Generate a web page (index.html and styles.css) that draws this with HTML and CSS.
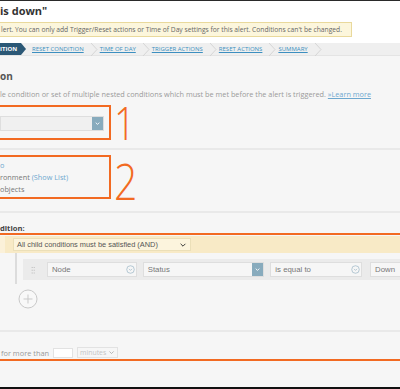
FILE: index.html
```html
<!DOCTYPE html>
<html lang="en">
<head>
    <meta charset="UTF-8">
    <title>Edit alert</title>
    <link rel="stylesheet" href="styles.css">
</head>
<body>
    <div class="shot">
        <header class="head">
            <h1 class="title">is down"</h1>
            <div class="notice">lert. You can only add Trigger/Reset actions or Time of Day settings for this alert. Conditions can't be changed.</div>
        </header>

        <nav class="steps">
            <span class="step current">ITION</span>
            <a class="step" href="#">RESET CONDITION</a>
            <svg class="sep" viewBox="0 0 8 13"><polyline points="1,0 7,6.5 1,13"/></svg>
            <a class="step" href="#">TIME OF DAY</a>
            <svg class="sep" viewBox="0 0 8 13"><polyline points="1,0 7,6.5 1,13"/></svg>
            <a class="step" href="#">TRIGGER ACTIONS</a>
            <svg class="sep" viewBox="0 0 8 13"><polyline points="1,0 7,6.5 1,13"/></svg>
            <a class="step" href="#">RESET ACTIONS</a>
            <svg class="sep" viewBox="0 0 8 13"><polyline points="1,0 7,6.5 1,13"/></svg>
            <a class="step" href="#">SUMMARY</a>
            <svg class="sep" viewBox="0 0 8 13"><polyline points="1,0 7,6.5 1,13"/></svg>
        </nav>

        <main class="content">
            <h2 class="section-title">on</h2>
            <p class="intro">le condition or set of multiple nested conditions which must be met before the alert is triggered. <a href="#">»Learn more</a></p>

            <div class="callout">
                <div class="mark mark-1">
                    <div class="select scope">
                        <span class="select-btn">
                            <svg viewBox="0 0 10 10"><polyline points="3,4 5,6 7,4"/></svg>
                        </span>
                    </div>
                </div>
                <span class="num">1</span>
            </div>

            <hr class="rule">

            <div class="callout">
                <div class="mark mark-2">
                    <div class="line"><span class="link">o</span></div>
                    <div class="line">ronment <span class="link">(Show List)</span></div>
                    <div class="line">objects</div>
                </div>
                <span class="num num-2">2</span>
            </div>

            <hr class="rule">

            <h3 class="label">dition:</h3>

            <div class="mark mark-3">
                <div class="group-bar">
                    <div class="select and">
                        <span>All child conditions must be satisfied (AND)</span>
                        <svg class="caret" viewBox="0 0 10 10"><polyline points="2,3.5 5,6.5 8,3.5"/></svg>
                    </div>
                </div>

                <div class="tree">
                    <div class="cond-row">
                        <span class="grip"></span>
                        <div class="select field node">
                            <span>Node</span>
                            <svg class="circ" viewBox="0 0 10 10"><circle cx="5" cy="5" r="4.2"/><polyline points="3.3,4.3 5,6 6.7,4.3"/></svg>
                        </div>
                        <div class="select field status">
                            <span>Status</span>
                            <span class="select-btn">
                                <svg viewBox="0 0 10 10"><polyline points="3,4 5,6 7,4"/></svg>
                            </span>
                        </div>
                        <div class="select field op">
                            <span>is equal to</span>
                            <svg class="circ" viewBox="0 0 10 10"><circle cx="5" cy="5" r="4.2"/><polyline points="3.3,4.3 5,6 6.7,4.3"/></svg>
                        </div>
                        <div class="select field value">
                            <span>Down</span>
                        </div>
                    </div>
                    <button class="add" type="button">
                        <svg viewBox="0 0 20 20"><circle cx="10" cy="10" r="9"/><line x1="10" y1="5.5" x2="10" y2="14.5"/><line x1="5.5" y1="10" x2="14.5" y2="10"/></svg>
                    </button>
                </div>

                <hr class="rule">

                <div class="duration">
                    <span>for more than</span>
                    <span class="num-input"></span>
                    <span class="unit">minutes
                        <svg viewBox="0 0 10 10"><polyline points="2,3.5 5,6.5 8,3.5"/></svg>
                    </span>
                </div>
            </div>
        </main>
    </div>
</body>
</html>
```

FILE: styles.css
```css
body {
    margin: 0;
    font-family: 'Open Sans', sans-serif;
    background-color: #f6f6f6;
    overflow: hidden;
}
.shot {
    height: 389px;
    box-sizing: border-box;
    border-top: 1px solid #2a2a2a;
    border-bottom: 2px solid #111;
    display: flex;
    flex-direction: column;
    overflow: hidden;
}

/* header */
.head {
    background-color: #fff;
    padding: 2px 0 6px;
}
.title {
    margin: 0;
    font-size: 11px;
    line-height: 15px;
    font-weight: bold;
    color: #333;
}
.notice {
    width: 354px;
    margin-top: 4px;
    margin-left: -2px;
    padding-left: 2px;
    box-sizing: border-box;
    height: 15px;
    line-height: 13px;
    font-size: 6.7px;
    color: #666;
    background-color: #fcf6dc;
    border: 1px solid #e9d99c;
    white-space: nowrap;
    overflow: hidden;
}

/* wizard steps */
.steps {
    height: 12px;
    display: flex;
    align-items: center;
    background-color: #efefef;
    border-bottom: 1px solid #e4e4e4;
}
.step {
    font-size: 6px;
    color: #3c8fc0;
    text-decoration: underline;
    margin: 0 6px 0 2px;
}
.step.current {
    align-self: stretch;
    display: flex;
    align-items: center;
    width: 26px;
    margin: 0 4px 0 0;
    color: #fff;
    font-weight: bold;
    text-decoration: none;
    background-color: #2b5876;
    clip-path: polygon(0 0, 21px 0, 26px 50%, 21px 100%, 0 100%);
}
.sep {
    width: 8px;
    height: 13px;
    fill: none;
    stroke: #cfcfcf;
    stroke-width: 0.8;
}

/* content */
.content {
    flex: 1;
}
.section-title {
    margin: 13px 0 0;
    font-size: 10px;
    line-height: 14px;
    font-weight: bold;
    color: #555;
}
.intro {
    margin: 6px 0 0;
    font-size: 7.3px;
    line-height: 10px;
    color: #9a9a9a;
    white-space: nowrap;
}
.intro a,
.link {
    color: #6ea8cf;
}
.intro a {
    text-decoration: underline;
}
.rule {
    margin: 0;
    border: none;
    border-top: 2px solid #e9e9e9;
}
.callout {
    display: flex;
    align-items: center;
    gap: 3px;
}
.callout:first-of-type {
    margin: 5px 0 8px;
}
.mark {
    border: 2px solid #f26a22;
    margin-left: -2px;
}
.mark-1 {
    width: 109px;
    padding: 9px 0 0;
    height: 22px;
}
.mark-2 {
    width: 109px;
    padding: 2px 0;
    margin: 5px 0 12px -2px;
    font-size: 7.3px;
    line-height: 12px;
    color: #777;
}
.num {
    font-size: 46px;
    line-height: 36px;
    font-weight: 300;
    color: #f26a22;
    transform: scaleX(0.82);
    transform-origin: left center;
}
.num-2 {
    font-size: 50px;
}

/* selects */
.select {
    display: flex;
    align-items: center;
    box-sizing: border-box;
    background-color: #f4f4f4;
    border: 1px solid #dedede;
    font-family: 'Liberation Sans', Arial, sans-serif;
    color: #777;
}
.select.scope {
    width: 104px;
    height: 15px;
    justify-content: flex-end;
    background-color: #f0f0f0;
}
.select-btn {
    width: 11px;
    height: 100%;
    display: flex;
    align-items: center;
    justify-content: center;
    background-color: #88abbd;
}
.select-btn svg {
    width: 9px;
    height: 9px;
    fill: none;
    stroke: #fff;
    stroke-width: 1;
}

.label {
    margin: 10px 0 0;
    font-size: 7.6px;
    line-height: 10px;
    font-weight: bold;
    color: #444;
}

/* condition builder */
.mark-3 {
    margin: 0 -10px 0 0;
    border-width: 2px 0;
    padding-bottom: 1px;
}
.group-bar {
    margin-top: 1px;
    height: 17px;
    padding: 2px 0 0 8px;
    box-sizing: border-box;
    background-color: #f8eac6;
    border-left: 5px solid #fbf1d9;
}
.select.and {
    width: 178px;
    height: 13px;
    padding: 0 3px;
    justify-content: space-between;
    background-color: #fcf4dd;
    border-color: #ebdfb8;
    font-size: 7.4px;
    color: #555;
}
.caret {
    width: 8px;
    height: 8px;
    fill: none;
    stroke: #333;
    stroke-width: 1.2;
}
.tree {
    margin-left: 15px;
    padding-top: 6px;
    position: relative;
}
.tree::before {
    content: "";
    position: absolute;
    left: 0;
    top: 0;
    width: 2px;
    height: 31px;
    background-color: #dcdcdc;
}
.cond-row {
    margin-left: 8px;
    height: 21px;
    display: flex;
    align-items: center;
    background-color: #ebebeb;
    padding-left: 8px;
}
.grip {
    width: 4px;
    height: 8px;
    margin-right: 12px;
    background-image: radial-gradient(circle, #bdbdbd 0.7px, transparent 0.9px);
    background-size: 2.5px 2.8px;
}
.select.field {
    height: 15px;
    padding-left: 4px;
    font-size: 7.8px;
    background-color: #f6f6f6;
    justify-content: space-between;
}
.node { width: 90px; margin-right: 6px; }
.status { width: 122px; margin-right: 6px; }
.op { width: 92px; margin-right: 8px; }
.value { width: 40px; }
.circ {
    width: 9px;
    height: 9px;
    margin-right: 1px;
    fill: none;
    stroke: #9cb6c6;
    stroke-width: 0.8;
}
.add {
    display: block;
    margin: 9px 0 0 3px;
    padding: 0;
    width: 20px;
    height: 20px;
    border: none;
    background: none;
}
.add svg {
    width: 20px;
    height: 20px;
    fill: #f8f8f8;
    stroke: #c9c9c9;
    stroke-width: 1;
}
.mark-3 .rule {
    margin-top: 21px;
}
.duration {
    margin-top: 15px;
    padding-left: 1px;
    height: 11px;
    display: flex;
    align-items: center;
    gap: 4px;
    font-size: 7.4px;
    color: #999;
}
.num-input {
    width: 20px;
    height: 10px;
    background-color: #fff;
    border: 1px solid #e2e2e2;
    box-sizing: border-box;
}
.unit {
    width: 41px;
    height: 11px;
    display: flex;
    align-items: center;
    justify-content: space-between;
    padding: 0 2px;
    border: 1px solid #e2e2e2;
    box-sizing: border-box;
    font-size: 6.9px;
    color: #c4c4c4;
}
.unit svg {
    width: 7px;
    height: 7px;
    fill: none;
    stroke: #aaa;
    stroke-width: 1.2;
}
```
